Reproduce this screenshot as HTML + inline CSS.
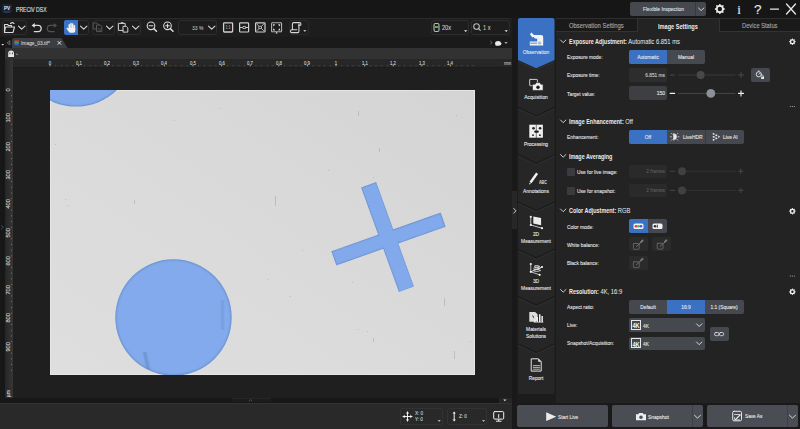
<!DOCTYPE html>
<html><head><meta charset="utf-8">
<style>
*{margin:0;padding:0;box-sizing:border-box}
html,body{width:800px;height:429px;overflow:hidden;background:#1c1c1c;font-family:"Liberation Sans",sans-serif;color:#e6e6e6}
.a{position:absolute}
.t{position:absolute;white-space:nowrap;line-height:1}
.t:not([style*="bold"]){-webkit-text-stroke:.12px currentColor}
svg{position:absolute;overflow:visible}
</style></head><body>
<div class="a" style="left:0px;top:0px;width:800px;height:18px;background:#161616;"></div>
<div class="a" style="left:2.2px;top:4px;width:9.7px;height:9.4px;background:#18223a;border-radius:1px"></div>
<div class="t" style="left:6.9px;top:6.44px;font-size:5.11px;color:#e9edf5;font-weight:bold;transform:translateX(-50%) scaleX(0.9);transform-origin:50% 0;">PV</div>
<svg width="800" height="429" style="left:0;top:0"><path d="M3.8 11.6q3.1 1.3 6.2 0" fill="none" stroke="#5a6a90" stroke-width=".5"/></svg>
<div class="t" style="left:16.25px;top:7.11px;font-size:6.37px;color:#e0e0e0;transform:scaleX(0.8);transform-origin:0 0;">PRECiV DSX</div>
<div class="a" style="left:0px;top:18px;width:512px;height:19px;background:#1d1d1d;border-top:1px solid #2b2b2b;border-radius:0 3px 0 0"></div>
<div class="a" style="left:2px;top:20px;width:25px;height:15px;background:transparent;border:1px solid #2d2d2d;border-radius:3px"></div>
<div class="a" style="left:64px;top:20px;width:25px;height:15px;background:transparent;border:1px solid #2d2d2d;border-radius:3px"></div>
<div class="a" style="left:64px;top:20px;width:14.3px;height:15px;background:#3a72c6;border-radius:2px 0 0 2px"></div>
<div class="a" style="left:91.5px;top:20px;width:23.5px;height:15px;background:transparent;border:1px solid #2a2a2a;border-radius:3px"></div>
<div class="a" style="left:117px;top:20px;width:24px;height:15px;background:transparent;border:1px solid #2d2d2d;border-radius:3px"></div>
<div class="a" style="left:178px;top:20px;width:39px;height:15px;background:transparent;border:1px solid #2d2d2d;border-radius:3px"></div>
<div class="a" style="left:289px;top:20px;width:20px;height:15px;background:transparent;border:1px solid #2a2a2a;border-radius:3px"></div>
<div class="a" style="left:431px;top:20px;width:38px;height:15px;background:transparent;border:1px solid #2d2d2d;border-radius:3px"></div>
<div class="a" style="left:471px;top:20px;width:39px;height:15px;background:transparent;border:1px solid #2d2d2d;border-radius:3px"></div>
<div class="t" style="left:228.1px;top:26.15px;font-size:4.50px;color:#9a9a9a;font-weight:bold;transform:translateX(-50%) scaleX(0.8);transform-origin:50% 0;">1:1</div>
<div class="t" style="left:191.5px;top:24.88px;font-size:6.25px;color:#aeb6be;transform:scaleX(0.8);transform-origin:0 0;">33 %</div>
<div class="t" style="left:442px;top:24.40px;font-size:7.00px;color:#c5cbd2;transform:scaleX(0.8);transform-origin:0 0;">20x</div>
<div class="t" style="left:483px;top:24.40px;font-size:7.00px;color:#c9c0a0;transform:scaleX(0.8);transform-origin:0 0;">1 x</div>
<svg width="800" height="429" style="left:0;top:0" fill="none" stroke="#d9d9d9" stroke-width="1.1" stroke-linecap="round" stroke-linejoin="round">
 <path d="M4.5 24.5v8h8.5l1.5-5.5h-9l-1 5.5M4.5 24.5h3l1 1h3v1.5"/>
 <path d="M10.5 23.5c1-1 2.5-1 3.5 0" />
 <path d="M18.5 26.2l3.2 3 3.2-3"/>
 <path d="M80.5 26.2l3.2 3 3.2-3"/>
 <path d="M106.5 26.2l3.2 3 3.2-3"/>
 <path d="M132.5 26.2l3.2 3 3.2-3"/>
 <path d="M208.5 26.2l3.2 3 3.2-3"/>
 <path d="M34.5 25.4h3.6a3.1 3.1 0 0 1 0 6.2h-3.8" stroke-width="1.2"/><path fill="#e0e0e0" stroke="none" d="M31.6 25.4l3.2-2.3v4.6z"/>
 <path stroke="#505050" d="M54 25.4h-3.6a3.1 3.1 0 0 0 0 6.2h3.8" stroke-width="1.2"/><path fill="#505050" stroke="none" d="M57 25.4l-3.2-2.3v4.6z"/>
 <g stroke="#f0f0f0" stroke-linecap="round" fill="#f0f0f0"><path stroke-width="1.5" d="M69.3 28.5V24.8M71 28V23.6M72.7 28V24M74.4 28.5V25.8M68.6 30.3L67.3 28.3"/><path stroke="none" d="M68.3 28h7v2.2q0 2.6-2.6 2.6h-2.4q-1.6 0-2-2z"/></g>
 <g stroke="#5c5c5c" stroke-width=".9"><path d="M93.6 22.9h3.2l1.5 1.5v4.6h-4.7z"/><path fill="#1d1d1d" d="M96.9 25h3.4l1.5 1.6v5h-4.9z"/><path d="M98 28.8h2.8M98 30.3h2.8" stroke-width=".6"/></g>
 <g stroke="#d0d0d0" stroke-width="1"><path d="M118.8 23.4h6.4v7h-6.4z"/><path fill="#d0d0d0" stroke="none" d="M120.8 22.2h2.6v1.6h-2.6z"/><path fill="#1d1d1d" d="M123.4 26.3h2.8l1.6 1.6v4.2h-4.4z"/></g>
 <circle cx="151" cy="25.8" r="3.8"/><path d="M153.8 28.6l2.7 2.7" stroke-width="1.5"/><path d="M149.2 25.8h3.6"/>
 <circle cx="167.5" cy="25.8" r="3.8"/><path d="M170.3 28.6l2.7 2.7" stroke-width="1.5"/><path d="M165.7 25.8h3.6M167.5 24v3.6"/>
 <rect x="223.6" y="22.8" width="9" height="9.2" rx=".8" stroke-width="1.3" stroke="#d0d0d0"/>
 <rect x="239.6" y="22.8" width="9" height="9.2" rx=".8" stroke-width="1.2" stroke="#d0d0d0"/><path d="M239.8 27.5h2.5M246.3 27.5h2.3" stroke-width=".9"/><ellipse cx="244.3" cy="27.5" rx="1.9" ry="1.1" stroke-width=".9"/>
 <rect x="255.6" y="22.8" width="9.4" height="9.2" rx=".8" stroke-width="1.2" stroke="#d0d0d0"/><rect x="259.2" y="26.3" width="2.3" height="2.3" stroke-width=".8"/><path d="M257 24.2l1.6 1.6M263.6 24.2l-1.6 1.6M257 30.6l1.6-1.6M263.6 30.6l-1.6-1.6" stroke-width=".8"/>
 <rect x="271.6" y="22.8" width="10" height="9" rx=".6" stroke-width="1.1" stroke="#bdbdbd" stroke-dasharray="1.6 1"/>
 <path fill="#e0e0e0" stroke="none" d="M273 24.2l2.3.3-2 2zM280.2 24.2l-2.3.3 2 2zM273 30.6l2.3-.3-2-2zM280.2 30.6l-2.3-.3 2-2zM275.6 33.4l1-1.8 1 1.8z"/>
 <g stroke="#d6d6d6" stroke-width="1.1"><path d="M292.4 29.6V23.9q0-1.3 1.3-1.3h5.9q1.3 0 1.3 1.3v.6q0 .9-.9 .9h-1.2"/><path d="M298.9 24v7.4q0 1.2-1.2 1.2h-5.9q-1.3 0-1.3-1.4t1.3-1.4h5"/></g>
 <path fill="#e6e6e6" stroke="none" d="M303.2 30.2h3.2l-1.6 1.6z"/>
 <rect x="434" y="23.5" width="5" height="8" rx="1.5" stroke="#bbb"/><path d="M434.5 26h4v2h-4z" fill="#5aa84a" stroke="none"/>
 <path fill="#e6e6e6" stroke="none" d="M464 30.2h3.4l-1.7 1.7zM504.5 30.2h3.4l-1.7 1.7z"/>
 <circle cx="476.5" cy="26.5" r="2.8" stroke="#bbb"/><path d="M478.5 28.5l1.8 1.8" stroke="#bbb"/>
</svg>
<div class="a" style="left:0px;top:37px;width:512px;height:11px;background:#1a1a1a;"></div>
<div class="a" style="left:0px;top:37px;width:5px;height:361px;background:#171717;"></div>
<svg width="800" height="429" style="left:0;top:0"><path fill="#3c3e42" d="M12 48V40Q12 38 14 38H61.5L67.5 48Z"/></svg>
<div class="t" style="left:21px;top:39.94px;font-size:6.12px;color:#cfcfcf;transform:scaleX(0.8);transform-origin:0 0;">Image_03.tif*</div>
<div class="a" style="left:5px;top:48px;width:507px;height:11.2px;background:#323232;"></div>
<div class="a" style="left:5px;top:59.2px;width:507px;height:8.3px;background:#272727;"></div>
<div class="a" style="left:5px;top:59.2px;width:8px;height:338.8px;background:linear-gradient(90deg,#262626,#363636);"></div>
<div class="a" style="left:13px;top:67.5px;width:499px;height:330.5px;background:#1f1f1f;"></div>
<svg width="800" height="429" style="left:0;top:0" fill="#8a8a8a" stroke="none"><rect x="49.60" y="64.8" width="0.8" height="1.6" fill="#aaa"/><rect x="55.32" y="65.3" width="0.8" height="0.9" fill="#6a6a6a"/><rect x="61.04" y="65.3" width="0.8" height="0.9" fill="#6a6a6a"/><rect x="66.76" y="65.3" width="0.8" height="0.9" fill="#6a6a6a"/><rect x="72.48" y="65.3" width="0.8" height="0.9" fill="#6a6a6a"/><rect x="78.20" y="64.8" width="0.8" height="1.6" fill="#aaa"/><rect x="83.92" y="65.3" width="0.8" height="0.9" fill="#6a6a6a"/><rect x="89.64" y="65.3" width="0.8" height="0.9" fill="#6a6a6a"/><rect x="95.36" y="65.3" width="0.8" height="0.9" fill="#6a6a6a"/><rect x="101.08" y="65.3" width="0.8" height="0.9" fill="#6a6a6a"/><rect x="106.80" y="64.8" width="0.8" height="1.6" fill="#aaa"/><rect x="112.52" y="65.3" width="0.8" height="0.9" fill="#6a6a6a"/><rect x="118.24" y="65.3" width="0.8" height="0.9" fill="#6a6a6a"/><rect x="123.96" y="65.3" width="0.8" height="0.9" fill="#6a6a6a"/><rect x="129.68" y="65.3" width="0.8" height="0.9" fill="#6a6a6a"/><rect x="135.40" y="64.8" width="0.8" height="1.6" fill="#aaa"/><rect x="141.12" y="65.3" width="0.8" height="0.9" fill="#6a6a6a"/><rect x="146.84" y="65.3" width="0.8" height="0.9" fill="#6a6a6a"/><rect x="152.56" y="65.3" width="0.8" height="0.9" fill="#6a6a6a"/><rect x="158.28" y="65.3" width="0.8" height="0.9" fill="#6a6a6a"/><rect x="164.00" y="64.8" width="0.8" height="1.6" fill="#aaa"/><rect x="169.72" y="65.3" width="0.8" height="0.9" fill="#6a6a6a"/><rect x="175.44" y="65.3" width="0.8" height="0.9" fill="#6a6a6a"/><rect x="181.16" y="65.3" width="0.8" height="0.9" fill="#6a6a6a"/><rect x="186.88" y="65.3" width="0.8" height="0.9" fill="#6a6a6a"/><rect x="192.60" y="64.8" width="0.8" height="1.6" fill="#aaa"/><rect x="198.32" y="65.3" width="0.8" height="0.9" fill="#6a6a6a"/><rect x="204.04" y="65.3" width="0.8" height="0.9" fill="#6a6a6a"/><rect x="209.76" y="65.3" width="0.8" height="0.9" fill="#6a6a6a"/><rect x="215.48" y="65.3" width="0.8" height="0.9" fill="#6a6a6a"/><rect x="221.20" y="64.8" width="0.8" height="1.6" fill="#aaa"/><rect x="226.92" y="65.3" width="0.8" height="0.9" fill="#6a6a6a"/><rect x="232.64" y="65.3" width="0.8" height="0.9" fill="#6a6a6a"/><rect x="238.36" y="65.3" width="0.8" height="0.9" fill="#6a6a6a"/><rect x="244.08" y="65.3" width="0.8" height="0.9" fill="#6a6a6a"/><rect x="249.80" y="64.8" width="0.8" height="1.6" fill="#aaa"/><rect x="255.52" y="65.3" width="0.8" height="0.9" fill="#6a6a6a"/><rect x="261.24" y="65.3" width="0.8" height="0.9" fill="#6a6a6a"/><rect x="266.96" y="65.3" width="0.8" height="0.9" fill="#6a6a6a"/><rect x="272.68" y="65.3" width="0.8" height="0.9" fill="#6a6a6a"/><rect x="278.40" y="64.8" width="0.8" height="1.6" fill="#aaa"/><rect x="284.12" y="65.3" width="0.8" height="0.9" fill="#6a6a6a"/><rect x="289.84" y="65.3" width="0.8" height="0.9" fill="#6a6a6a"/><rect x="295.56" y="65.3" width="0.8" height="0.9" fill="#6a6a6a"/><rect x="301.28" y="65.3" width="0.8" height="0.9" fill="#6a6a6a"/><rect x="307.00" y="64.8" width="0.8" height="1.6" fill="#aaa"/><rect x="312.72" y="65.3" width="0.8" height="0.9" fill="#6a6a6a"/><rect x="318.44" y="65.3" width="0.8" height="0.9" fill="#6a6a6a"/><rect x="324.16" y="65.3" width="0.8" height="0.9" fill="#6a6a6a"/><rect x="329.88" y="65.3" width="0.8" height="0.9" fill="#6a6a6a"/><rect x="335.60" y="64.8" width="0.8" height="1.6" fill="#aaa"/><rect x="341.32" y="65.3" width="0.8" height="0.9" fill="#6a6a6a"/><rect x="347.04" y="65.3" width="0.8" height="0.9" fill="#6a6a6a"/><rect x="352.76" y="65.3" width="0.8" height="0.9" fill="#6a6a6a"/><rect x="358.48" y="65.3" width="0.8" height="0.9" fill="#6a6a6a"/><rect x="364.20" y="64.8" width="0.8" height="1.6" fill="#aaa"/><rect x="369.92" y="65.3" width="0.8" height="0.9" fill="#6a6a6a"/><rect x="375.64" y="65.3" width="0.8" height="0.9" fill="#6a6a6a"/><rect x="381.36" y="65.3" width="0.8" height="0.9" fill="#6a6a6a"/><rect x="387.08" y="65.3" width="0.8" height="0.9" fill="#6a6a6a"/><rect x="392.80" y="64.8" width="0.8" height="1.6" fill="#aaa"/><rect x="398.52" y="65.3" width="0.8" height="0.9" fill="#6a6a6a"/><rect x="404.24" y="65.3" width="0.8" height="0.9" fill="#6a6a6a"/><rect x="409.96" y="65.3" width="0.8" height="0.9" fill="#6a6a6a"/><rect x="415.68" y="65.3" width="0.8" height="0.9" fill="#6a6a6a"/><rect x="421.40" y="64.8" width="0.8" height="1.6" fill="#aaa"/><rect x="427.12" y="65.3" width="0.8" height="0.9" fill="#6a6a6a"/><rect x="432.84" y="65.3" width="0.8" height="0.9" fill="#6a6a6a"/><rect x="438.56" y="65.3" width="0.8" height="0.9" fill="#6a6a6a"/><rect x="444.28" y="65.3" width="0.8" height="0.9" fill="#6a6a6a"/><rect x="450.00" y="64.8" width="0.8" height="1.6" fill="#aaa"/><rect x="455.72" y="65.3" width="0.8" height="0.9" fill="#6a6a6a"/><rect x="461.44" y="65.3" width="0.8" height="0.9" fill="#6a6a6a"/><rect x="467.16" y="65.3" width="0.8" height="0.9" fill="#6a6a6a"/><rect x="472.88" y="65.3" width="0.8" height="0.9" fill="#6a6a6a"/><rect x="11" y="95.32" width="0.9" height="0.8"/><rect x="11" y="101.04" width="0.9" height="0.8"/><rect x="11" y="106.76" width="0.9" height="0.8"/><rect x="11" y="112.48" width="0.9" height="0.8"/><rect x="11" y="123.92" width="0.9" height="0.8"/><rect x="11" y="129.64" width="0.9" height="0.8"/><rect x="11" y="135.36" width="0.9" height="0.8"/><rect x="11" y="141.08" width="0.9" height="0.8"/><rect x="11" y="152.52" width="0.9" height="0.8"/><rect x="11" y="158.24" width="0.9" height="0.8"/><rect x="11" y="163.96" width="0.9" height="0.8"/><rect x="11" y="169.68" width="0.9" height="0.8"/><rect x="11" y="181.12" width="0.9" height="0.8"/><rect x="11" y="186.84" width="0.9" height="0.8"/><rect x="11" y="192.56" width="0.9" height="0.8"/><rect x="11" y="198.28" width="0.9" height="0.8"/><rect x="11" y="209.72" width="0.9" height="0.8"/><rect x="11" y="215.44" width="0.9" height="0.8"/><rect x="11" y="221.16" width="0.9" height="0.8"/><rect x="11" y="226.88" width="0.9" height="0.8"/><rect x="11" y="238.32" width="0.9" height="0.8"/><rect x="11" y="244.04" width="0.9" height="0.8"/><rect x="11" y="249.76" width="0.9" height="0.8"/><rect x="11" y="255.48" width="0.9" height="0.8"/><rect x="11" y="266.92" width="0.9" height="0.8"/><rect x="11" y="272.64" width="0.9" height="0.8"/><rect x="11" y="278.36" width="0.9" height="0.8"/><rect x="11" y="284.08" width="0.9" height="0.8"/><rect x="11" y="295.52" width="0.9" height="0.8"/><rect x="11" y="301.24" width="0.9" height="0.8"/><rect x="11" y="306.96" width="0.9" height="0.8"/><rect x="11" y="312.68" width="0.9" height="0.8"/><rect x="11" y="324.12" width="0.9" height="0.8"/><rect x="11" y="329.84" width="0.9" height="0.8"/><rect x="11" y="335.56" width="0.9" height="0.8"/><rect x="11" y="341.28" width="0.9" height="0.8"/><rect x="11" y="352.72" width="0.9" height="0.8"/><rect x="11" y="358.44" width="0.9" height="0.8"/><rect x="11" y="364.16" width="0.9" height="0.8"/><rect x="11" y="369.88" width="0.9" height="0.8"/></svg>
<div class="t" style="left:50.0px;top:60.71px;font-size:5.37px;color:#d0d0d0;transform:translateX(-50%) scaleX(0.8);transform-origin:50% 0;">0</div>
<div class="t" style="left:78.6px;top:60.71px;font-size:5.37px;color:#d0d0d0;transform:translateX(-50%) scaleX(0.8);transform-origin:50% 0;">0,1</div>
<div class="t" style="left:107.2px;top:60.71px;font-size:5.37px;color:#d0d0d0;transform:translateX(-50%) scaleX(0.8);transform-origin:50% 0;">0,2</div>
<div class="t" style="left:135.8px;top:60.71px;font-size:5.37px;color:#d0d0d0;transform:translateX(-50%) scaleX(0.8);transform-origin:50% 0;">0,3</div>
<div class="t" style="left:164.4px;top:60.71px;font-size:5.37px;color:#d0d0d0;transform:translateX(-50%) scaleX(0.8);transform-origin:50% 0;">0,4</div>
<div class="t" style="left:193.0px;top:60.71px;font-size:5.37px;color:#d0d0d0;transform:translateX(-50%) scaleX(0.8);transform-origin:50% 0;">0,5</div>
<div class="t" style="left:221.60000000000002px;top:60.71px;font-size:5.37px;color:#d0d0d0;transform:translateX(-50%) scaleX(0.8);transform-origin:50% 0;">0,6</div>
<div class="t" style="left:250.20000000000002px;top:60.71px;font-size:5.37px;color:#d0d0d0;transform:translateX(-50%) scaleX(0.8);transform-origin:50% 0;">0,7</div>
<div class="t" style="left:278.8px;top:60.71px;font-size:5.37px;color:#d0d0d0;transform:translateX(-50%) scaleX(0.8);transform-origin:50% 0;">0,8</div>
<div class="t" style="left:307.40000000000003px;top:60.71px;font-size:5.37px;color:#d0d0d0;transform:translateX(-50%) scaleX(0.8);transform-origin:50% 0;">0,9</div>
<div class="t" style="left:336.0px;top:60.71px;font-size:5.37px;color:#d0d0d0;transform:translateX(-50%) scaleX(0.8);transform-origin:50% 0;">1</div>
<div class="t" style="left:364.6px;top:60.71px;font-size:5.37px;color:#d0d0d0;transform:translateX(-50%) scaleX(0.8);transform-origin:50% 0;">1,1</div>
<div class="t" style="left:393.20000000000005px;top:60.71px;font-size:5.37px;color:#d0d0d0;transform:translateX(-50%) scaleX(0.8);transform-origin:50% 0;">1,2</div>
<div class="t" style="left:421.8px;top:60.71px;font-size:5.37px;color:#d0d0d0;transform:translateX(-50%) scaleX(0.8);transform-origin:50% 0;">1,3</div>
<div class="t" style="left:450.40000000000003px;top:60.71px;font-size:5.37px;color:#d0d0d0;transform:translateX(-50%) scaleX(0.8);transform-origin:50% 0;">1,4</div>
<div class="t" style="left:503.5px;top:60.71px;font-size:5.37px;color:#bdbdbd;transform:scaleX(0.8);transform-origin:0 0;">mm</div>
<div class="t" style="left:-1.2px;width:20px;text-align:center;top:86.6px;font-size:5.7px;color:#d4d4d4;transform:rotate(-90deg)">0</div>
<div class="t" style="left:-1.2px;width:20px;text-align:center;top:115.2px;font-size:5.7px;color:#d4d4d4;transform:rotate(-90deg)">100</div>
<div class="t" style="left:-1.2px;width:20px;text-align:center;top:143.8px;font-size:5.7px;color:#d4d4d4;transform:rotate(-90deg)">200</div>
<div class="t" style="left:-1.2px;width:20px;text-align:center;top:172.4px;font-size:5.7px;color:#d4d4d4;transform:rotate(-90deg)">300</div>
<div class="t" style="left:-1.2px;width:20px;text-align:center;top:201.0px;font-size:5.7px;color:#d4d4d4;transform:rotate(-90deg)">400</div>
<div class="t" style="left:-1.2px;width:20px;text-align:center;top:229.6px;font-size:5.7px;color:#d4d4d4;transform:rotate(-90deg)">500</div>
<div class="t" style="left:-1.2px;width:20px;text-align:center;top:258.2px;font-size:5.7px;color:#d4d4d4;transform:rotate(-90deg)">600</div>
<div class="t" style="left:-1.2px;width:20px;text-align:center;top:286.8px;font-size:5.7px;color:#d4d4d4;transform:rotate(-90deg)">700</div>
<div class="t" style="left:-1.2px;width:20px;text-align:center;top:315.4px;font-size:5.7px;color:#d4d4d4;transform:rotate(-90deg)">800</div>
<div class="t" style="left:-1.2px;width:20px;text-align:center;top:344.0px;font-size:5.7px;color:#d4d4d4;transform:rotate(-90deg)">900</div>
<div class="t" style="left:-1.2px;width:20px;text-align:center;top:390.5px;font-size:5.2px;color:#cfcfcf;transform:rotate(-90deg)">µm</div>
<div class="a" style="left:50px;top:90px;width:425px;height:285px;background:#d9d9d9;overflow:hidden">
  <div class="a" style="left:0;top:0;width:425px;height:285px;background:linear-gradient(to top right,#dedede,#dadada 50%,#d4d4d4)"></div>
  <div class="a" style="left:0;top:0;width:425px;height:285px;border:1px solid #e6e6e6"></div>
  <div class="a" style="left:4.9px;top:53.7px;width:0.7px;height:0.7px;background:#8a8a8a;opacity:.35"></div><div class="a" style="left:14.7px;top:108.5px;width:0.6px;height:0.6px;background:#8a8a8a;opacity:.35"></div><div class="a" style="left:17.0px;top:115.0px;width:0.6px;height:0.6px;background:#8a8a8a;opacity:.35"></div><div class="a" style="left:84.0px;top:110.0px;width:0.5px;height:4px;background:#8a8a8a;opacity:.35"></div><div class="a" style="left:123.8px;top:30.3px;width:0.6px;height:0.6px;background:#8a8a8a;opacity:.35"></div><div class="a" style="left:169.0px;top:18.0px;width:0.6px;height:0.6px;background:#8a8a8a;opacity:.35"></div><div class="a" style="left:307.9px;top:20.5px;width:0.6px;height:5px;background:#8a8a8a;opacity:.35"></div><div class="a" style="left:329.0px;top:58.0px;width:0.6px;height:4px;background:#8a8a8a;opacity:.35"></div><div class="a" style="left:277.9px;top:80.0px;width:0.6px;height:0.6px;background:#8a8a8a;opacity:.35"></div><div class="a" style="left:322.6px;top:87.4px;width:0.7px;height:0.7px;background:#8a8a8a;opacity:.35"></div><div class="a" style="left:224.7px;top:106.0px;width:0.6px;height:10px;background:#8a8a8a;opacity:.35"></div><div class="a" style="left:405.8px;top:24.5px;width:0.6px;height:0.6px;background:#8a8a8a;opacity:.35"></div><div class="a" style="left:218.4px;top:189.0px;width:0.6px;height:0.6px;background:#8a8a8a;opacity:.35"></div><div class="a" style="left:301.9px;top:192.4px;width:0.8px;height:0.8px;background:#8a8a8a;opacity:.35"></div><div class="a" style="left:308.0px;top:238.6px;width:0.6px;height:0.6px;background:#8a8a8a;opacity:.35"></div><div class="a" style="left:317.4px;top:240.7px;width:0.6px;height:0.6px;background:#8a8a8a;opacity:.35"></div><div class="a" style="left:323.0px;top:248.0px;width:0.5px;height:4px;background:#8a8a8a;opacity:.35"></div><div class="a" style="left:394.0px;top:208.0px;width:0.5px;height:8px;background:#8a8a8a;opacity:.35"></div><div class="a" style="left:404.0px;top:261.0px;width:0.5px;height:8px;background:#8a8a8a;opacity:.35"></div><div class="a" style="left:419.5px;top:250.8px;width:0.6px;height:0.6px;background:#8a8a8a;opacity:.35"></div><div class="a" style="left:252.0px;top:160.0px;width:0.6px;height:0.6px;background:#8a8a8a;opacity:.35"></div><div class="a" style="left:240.4px;top:206.0px;width:0.6px;height:0.6px;background:#8a8a8a;opacity:.35"></div>
  <div class="a" style="left:-32px;top:-100px;width:116px;height:116px;border-radius:50%;background:#82aaec;box-shadow:0 0 0 .6px #6f93cf,inset 0 0 2px #5d84c0"></div>
  <div class="a" style="left:65.6px;top:169.9px;width:115px;height:115px;border-radius:50%;background:#82aaec;box-shadow:0 0 0 .7px #6f93cf;overflow:hidden"><div class="a" style="left:28px;top:92px;width:6px;height:20px;background:linear-gradient(90deg,transparent,#4f78a8 40%,transparent);opacity:.45;transform:rotate(-12deg)"></div><div class="a" style="left:104px;top:40px;width:5px;height:30px;background:linear-gradient(90deg,transparent,#5b82b8,transparent);opacity:.3"></div><div class="a" style="left:0;top:0;width:115px;height:115px;border-radius:50%;box-shadow:inset 0 0 2px #5d84c0"></div></div>
  <div class="a" style="left:330px;top:92px;width:15px;height:110px;background:#82a9eb;box-shadow:0 0 0 .5px #7397d4,inset 0 0 1.5px #5d84c0;transform:rotate(-19.9deg)"></div>
  <div class="a" style="left:280.5px;top:141.5px;width:115px;height:14px;background:#82a9eb;box-shadow:0 0 0 .5px #7397d4,inset 0 0 1.5px #5d84c0;transform:rotate(-19.5deg)"></div>
  <div class="a" style="left:330.5px;top:92.5px;width:14px;height:109px;background:#82a9eb;transform:rotate(-19.9deg)"></div>
</div>
<div class="a" style="left:0px;top:398px;width:512px;height:5px;background:#171717;"></div>
<div class="a" style="left:232px;top:397.8px;width:38.6px;height:4.7px;background:#1c1c1c;border-top:1px solid #262626"></div>
<svg width="800" height="429" style="left:0;top:0"><path d="M248.8 401.3l1.8-1.8 1.8 1.8" fill="none" stroke="#5a5a5a" stroke-width=".8"/></svg>
<div class="a" style="left:0px;top:403px;width:512px;height:26px;background:#292929;border-top:1px solid #333"></div>
<div class="a" style="left:400.2px;top:407.8px;width:42.5px;height:17px;background:transparent;border:1px solid #323232;border-radius:2px"></div>
<div class="a" style="left:447.2px;top:407.8px;width:40px;height:17px;background:transparent;border:1px solid #323232;border-radius:2px"></div>
<div class="t" style="left:414.5px;top:411.12px;font-size:5.75px;color:#c8d0d8;transform:scaleX(0.8);transform-origin:0 0;">X: 0</div>
<div class="t" style="left:414.5px;top:417.32px;font-size:5.75px;color:#c8d0d8;transform:scaleX(0.8);transform-origin:0 0;">Y: 0</div>
<div class="t" style="left:458.7px;top:414.32px;font-size:5.75px;color:#c8d0d8;transform:scaleX(0.8);transform-origin:0 0;">Z: 0</div>
<div class="a" style="left:498.6px;top:398px;width:13px;height:5px;background:#262626;"></div>
<div class="a" style="left:512px;top:18px;width:5px;height:411px;background:#191919;"></div>
<div class="a" style="left:517px;top:18px;width:39px;height:385px;background:#1c1c1c;"></div>
<div class="a" style="left:512.3px;top:191.2px;width:4.6px;height:38px;background:#272727;"></div>
<svg width="800" height="429" style="left:0;top:0"><path d="M1.2 225.3l2.2 2-2.2 2" fill="none" stroke="#555" stroke-width=".8"/></svg>
<svg width="800" height="429" style="left:0;top:0"><path d="M513.5 208.2l2.5 2.6-2.5 2.6" fill="none" stroke="#e0e0e0" stroke-width=".9"/></svg>
<svg width="800" height="429" style="left:0;top:0"><path fill="#262626" d="M518 50H554.5V392Q554.5 394 552.5 394H520Q518 394 518 392Z"/><path fill="#3a71c3" d="M518 20Q518 18 520 18H552.5Q554.5 18 554.5 20V60.0L536.25 68.3L518 60.0Z"/><path fill="none" stroke="#1b1b1b" stroke-width="1.1" d="M518 107.3L536.25 115.9L554.5 107.3"/><path fill="none" stroke="#313131" stroke-width=".8" d="M518 108.9L536.25 117.5L554.5 108.9"/><path fill="none" stroke="#1b1b1b" stroke-width="1.1" d="M518 154.6L536.25 163.2L554.5 154.6"/><path fill="none" stroke="#313131" stroke-width=".8" d="M518 156.2L536.25 164.8L554.5 156.2"/><path fill="none" stroke="#1b1b1b" stroke-width="1.1" d="M518 201.9L536.25 210.5L554.5 201.9"/><path fill="none" stroke="#313131" stroke-width=".8" d="M518 203.5L536.25 212.1L554.5 203.5"/><path fill="none" stroke="#1b1b1b" stroke-width="1.1" d="M518 249.2L536.25 257.8L554.5 249.2"/><path fill="none" stroke="#313131" stroke-width=".8" d="M518 250.8L536.25 259.4L554.5 250.8"/><path fill="none" stroke="#1b1b1b" stroke-width="1.1" d="M518 296.5L536.25 305.1L554.5 296.5"/><path fill="none" stroke="#313131" stroke-width=".8" d="M518 298.1L536.25 306.7L554.5 298.1"/><path fill="none" stroke="#1b1b1b" stroke-width="1.1" d="M518 343.8L536.25 352.4L554.5 343.8"/><path fill="none" stroke="#313131" stroke-width=".8" d="M518 345.4L536.25 354.0L554.5 345.4"/><path fill="none" stroke="#313131" stroke-width=".8" d="M518 61.8L536.25 70.1L554.5 61.8"/></svg>
<div class="t" style="left:538.5px;top:181.05px;font-size:4.50px;color:#e0e0e0;font-weight:bold;transform:scaleX(0.8);transform-origin:0 0;">ABC</div>
<div class="t" style="left:536.25px;top:48.74px;font-size:6.12px;color:#e6e6e6;transform:translateX(-50%) scaleX(0.8);transform-origin:50% 0;">Observation</div>
<div class="t" style="left:536.25px;top:93.94px;font-size:6.12px;color:#e6e6e6;transform:translateX(-50%) scaleX(0.8);transform-origin:50% 0;">Acquisition</div>
<div class="t" style="left:536.25px;top:140.94px;font-size:6.12px;color:#e6e6e6;transform:translateX(-50%) scaleX(0.8);transform-origin:50% 0;">Processing</div>
<div class="t" style="left:536.25px;top:188.44px;font-size:6.12px;color:#e6e6e6;transform:translateX(-50%) scaleX(0.8);transform-origin:50% 0;">Annotations</div>
<div class="t" style="left:536.25px;top:231.34px;font-size:6.12px;color:#e6e6e6;transform:translateX(-50%) scaleX(0.8);transform-origin:50% 0;">2D</div>
<div class="t" style="left:536.25px;top:238.34px;font-size:6.12px;color:#e6e6e6;transform:translateX(-50%) scaleX(0.8);transform-origin:50% 0;">Measurement</div>
<div class="t" style="left:536.25px;top:278.44px;font-size:6.12px;color:#e6e6e6;transform:translateX(-50%) scaleX(0.8);transform-origin:50% 0;">3D</div>
<div class="t" style="left:536.25px;top:285.44px;font-size:6.12px;color:#e6e6e6;transform:translateX(-50%) scaleX(0.8);transform-origin:50% 0;">Measurement</div>
<div class="t" style="left:536.25px;top:325.94px;font-size:6.12px;color:#e6e6e6;transform:translateX(-50%) scaleX(0.8);transform-origin:50% 0;">Materials</div>
<div class="t" style="left:536.25px;top:332.94px;font-size:6.12px;color:#e6e6e6;transform:translateX(-50%) scaleX(0.8);transform-origin:50% 0;">Solutions</div>
<div class="t" style="left:536.25px;top:374.94px;font-size:6.12px;color:#e6e6e6;transform:translateX(-50%) scaleX(0.8);transform-origin:50% 0;">Report</div>
<div class="a" style="left:556px;top:32px;width:244px;height:371px;background:#232323;"></div>
<div class="a" style="left:556px;top:18px;width:244px;height:14px;background:#1a1a1a;border-top:1px solid #2e2e2e"></div>
<div class="a" style="left:556px;top:31px;width:82px;height:1px;background:#333;"></div>
<div class="a" style="left:637px;top:18px;width:1px;height:14px;background:#333;"></div>
<div class="a" style="left:638px;top:18px;width:81px;height:14px;background:#232323;border-top:1px solid #333"></div>
<div class="a" style="left:719px;top:18px;width:1px;height:14px;background:#333;"></div>
<div class="a" style="left:719px;top:31px;width:81px;height:1px;background:#333;"></div>
<div class="t" style="left:568.5px;top:22.31px;font-size:7.38px;color:#a8a8a8;transform:scaleX(0.8);transform-origin:0 0;">Observation Settings</div>
<div class="t" style="left:657.8px;top:22.50px;font-size:7.00px;color:#ececec;font-weight:bold;transform:scaleX(0.8);transform-origin:0 0;">Image Settings</div>
<div class="t" style="left:741.5px;top:22.41px;font-size:7.19px;color:#a8a8a8;transform:scaleX(0.8);transform-origin:0 0;">Device Status</div>
<div class="t" style="left:568.5px;top:38.1px;font-size:6.81px;font-weight:bold;color:#ececec;transform:scaleX(0.8);transform-origin:0 0">Exposure Adjustment: <span style="font-weight:normal;font-size:7.31px">Automatic 6.851 ms</span></div>
<div class="t" style="left:566.5px;top:53.94px;font-size:6.12px;color:#e2e2e2;transform:scaleX(0.8);transform-origin:0 0;">Exposure mode:</div>
<div class="a" style="left:629px;top:49.5px;width:76px;height:14px;background:#46494f;border-radius:2px"></div>
<div class="a" style="left:629px;top:49.5px;width:38px;height:14px;background:#3a71c3;border-radius:2px 0 0 2px"></div>
<div class="t" style="left:648.0px;top:54.24px;font-size:6.12px;color:#e8e8e8;transform:translateX(-50%) scaleX(0.8);transform-origin:50% 0;">Automatic</div>
<div class="t" style="left:686px;top:54.24px;font-size:6.12px;color:#e8e8e8;transform:translateX(-50%) scaleX(0.8);transform-origin:50% 0;">Manual</div>
<div class="t" style="left:566.5px;top:72.44px;font-size:6.12px;color:#e2e2e2;transform:scaleX(0.8);transform-origin:0 0;">Exposure time:</div>
<div class="a" style="left:629px;top:68px;width:38px;height:14px;background:#2d2d2e;border-radius:2px"></div>
<div class="t" style="left:665px;top:72.00px;font-size:6.00px;color:#cfcfcf;transform:translateX(-100%) scaleX(0.8);transform-origin:100% 0;">6.851 ms</div>
<div class="t" style="left:566.5px;top:90.74px;font-size:6.12px;color:#e2e2e2;transform:scaleX(0.8);transform-origin:0 0;">Target value:</div>
<div class="a" style="left:629px;top:86.3px;width:38px;height:14px;background:#3d3f43;border-radius:2px"></div>
<div class="t" style="left:665px;top:90.17px;font-size:6.25px;color:#e6e6e6;transform:translateX(-100%) scaleX(0.8);transform-origin:100% 0;">150</div>
<div class="a" style="left:750.5px;top:68px;width:19px;height:14px;background:#45484e;border-radius:2px"></div>
<div class="t" style="left:568.5px;top:118.1px;font-size:6.81px;font-weight:bold;color:#ececec;transform:scaleX(0.8);transform-origin:0 0">Image Enhancement: <span style="font-weight:normal;font-size:7.31px">Off</span></div>
<div class="t" style="left:566.5px;top:133.74px;font-size:6.12px;color:#e2e2e2;transform:scaleX(0.8);transform-origin:0 0;">Enhancement:</div>
<div class="a" style="left:629px;top:129.5px;width:114.5px;height:14px;background:#45484e;border-radius:2px"></div>
<div class="a" style="left:629px;top:129.5px;width:38px;height:14px;background:#3a71c3;border-radius:2px 0 0 2px"></div>
<div class="t" style="left:648.0px;top:134.24px;font-size:6.12px;color:#e8e8e8;transform:translateX(-50%) scaleX(0.8);transform-origin:50% 0;">Off</div>
<div class="a" style="left:705px;top:129.5px;width:1px;height:14px;background:#393b40;"></div>
<div class="t" style="left:683px;top:134.04px;font-size:6.12px;color:#e8e8e8;transform:scaleX(0.8);transform-origin:0 0;">LiveHDR</div>
<div class="t" style="left:722.5px;top:134.04px;font-size:6.12px;color:#e8e8e8;transform:scaleX(0.8);transform-origin:0 0;">Live AI</div>
<div class="t" style="left:568.5px;top:152.6px;font-size:6.81px;font-weight:bold;color:#ececec;transform:scaleX(0.8);transform-origin:0 0">Image Averaging <span style="font-weight:normal;font-size:7.31px"></span></div>
<div class="a" style="left:566.5px;top:168px;width:8px;height:8px;background:#3a3b3e;border-radius:1px"></div>
<div class="a" style="left:566.5px;top:187px;width:8px;height:8px;background:#3a3b3e;border-radius:1px"></div>
<div class="t" style="left:577px;top:168.94px;font-size:6.12px;color:#e2e2e2;transform:scaleX(0.8);transform-origin:0 0;">Use for live image:</div>
<div class="t" style="left:577px;top:187.94px;font-size:6.12px;color:#e2e2e2;transform:scaleX(0.8);transform-origin:0 0;">Use for snapshot:</div>
<div class="a" style="left:629px;top:164.5px;width:38px;height:13.5px;background:#2a2a2b;border-radius:2px"></div>
<div class="a" style="left:629px;top:183.5px;width:38px;height:13.5px;background:#2a2a2b;border-radius:2px"></div>
<div class="t" style="left:665px;top:168.30px;font-size:6.00px;color:#5c5c5c;transform:translateX(-100%) scaleX(0.8);transform-origin:100% 0;">2 frames</div>
<div class="t" style="left:665px;top:187.30px;font-size:6.00px;color:#5c5c5c;transform:translateX(-100%) scaleX(0.8);transform-origin:100% 0;">2 frames</div>
<div class="t" style="left:568.5px;top:207.1px;font-size:6.81px;font-weight:bold;color:#ececec;transform:scaleX(0.8);transform-origin:0 0">Color Adjustment: <span style="font-weight:normal;font-size:7.31px">RGB</span></div>
<div class="t" style="left:566.5px;top:223.54px;font-size:6.12px;color:#e2e2e2;transform:scaleX(0.8);transform-origin:0 0;">Color mode:</div>
<div class="a" style="left:629px;top:219.3px;width:38px;height:13.7px;background:#45484e;border-radius:2px"></div>
<div class="a" style="left:629px;top:219.3px;width:19px;height:13.7px;background:#3a71c3;border-radius:2px 0 0 2px"></div>
<div class="t" style="left:566.5px;top:241.64px;font-size:6.12px;color:#e2e2e2;transform:scaleX(0.8);transform-origin:0 0;">White balance:</div>
<div class="a" style="left:629px;top:237.3px;width:19px;height:14px;background:#2b2b2c;border-radius:2px"></div>
<div class="a" style="left:652px;top:237.3px;width:19px;height:14px;background:#2b2b2c;border-radius:2px"></div>
<div class="t" style="left:566.5px;top:259.84px;font-size:6.12px;color:#e2e2e2;transform:scaleX(0.8);transform-origin:0 0;">Black balance:</div>
<div class="a" style="left:629px;top:255.5px;width:19px;height:14px;background:#2b2b2c;border-radius:2px"></div>
<div class="t" style="left:568.5px;top:287.6px;font-size:6.81px;font-weight:bold;color:#ececec;transform:scaleX(0.8);transform-origin:0 0">Resolution: <span style="font-weight:normal;font-size:7.31px">4K, 16:9</span></div>
<div class="t" style="left:566.5px;top:303.94px;font-size:6.12px;color:#e2e2e2;transform:scaleX(0.8);transform-origin:0 0;">Aspect ratio:</div>
<div class="a" style="left:629px;top:300px;width:114.5px;height:13.5px;background:#45484e;border-radius:2px"></div>
<div class="a" style="left:667px;top:300px;width:38px;height:13.5px;background:#3a71c3;border-radius:0"></div>
<div class="t" style="left:686.0px;top:304.49px;font-size:6.12px;color:#e8e8e8;transform:translateX(-50%) scaleX(0.8);transform-origin:50% 0;">16:9</div>
<div class="t" style="left:648px;top:304.44px;font-size:6.12px;color:#e8e8e8;transform:translateX(-50%) scaleX(0.8);transform-origin:50% 0;">Default</div>
<div class="t" style="left:724.3px;top:304.44px;font-size:6.12px;color:#e8e8e8;transform:translateX(-50%) scaleX(0.8);transform-origin:50% 0;">1:1 (Square)</div>
<div class="t" style="left:566.5px;top:322.44px;font-size:6.12px;color:#e2e2e2;transform:scaleX(0.8);transform-origin:0 0;">Live:</div>
<div class="a" style="left:629px;top:318.4px;width:76px;height:13.6px;background:#45484e;border-radius:2px"></div>
<div class="t" style="left:566.5px;top:340.44px;font-size:6.12px;color:#e2e2e2;transform:scaleX(0.8);transform-origin:0 0;">Snapshot/Acquisition:</div>
<div class="a" style="left:629px;top:336.6px;width:76px;height:13.6px;background:#45484e;border-radius:2px"></div>
<div class="a" style="left:710px;top:327.3px;width:18.5px;height:14px;background:#45484e;border-radius:2px"></div>
<div class="a" style="left:630.5px;top:320.0px;width:10.2px;height:10px;background:transparent;border:1px solid #e6e6e6"></div>
<div class="t" style="left:635.6px;top:322.30px;font-size:7.00px;color:#f4f4f4;font-weight:bold;transform:translateX(-50%) scaleX(0.8);transform-origin:50% 0;">4K</div>
<div class="t" style="left:642.5px;top:323.00px;font-size:6.00px;color:#e6e6e6;transform:scaleX(0.8);transform-origin:0 0;">4K</div>
<div class="a" style="left:630.5px;top:338.2px;width:10.2px;height:10px;background:transparent;border:1px solid #e6e6e6"></div>
<div class="t" style="left:635.6px;top:340.50px;font-size:7.00px;color:#f4f4f4;font-weight:bold;transform:translateX(-50%) scaleX(0.8);transform-origin:50% 0;">4K</div>
<div class="t" style="left:642.5px;top:341.20px;font-size:6.00px;color:#e6e6e6;transform:scaleX(0.8);transform-origin:0 0;">4K</div>
<div class="a" style="left:512px;top:403px;width:288px;height:26px;background:#1a1a1a;"></div>
<div class="a" style="left:517px;top:405px;width:91px;height:22px;background:#4a4d53;border-radius:2px"></div>
<div class="a" style="left:612px;top:405px;width:91px;height:22px;background:#4a4d53;border-radius:2px"></div>
<div class="a" style="left:707px;top:405px;width:91px;height:22px;background:#4a4d53;border-radius:2px"></div>
<div class="a" style="left:630px;top:2px;width:76px;height:14px;background:#45484e;border-radius:2px"></div>
<div class="a" style="left:695px;top:2px;width:1px;height:14px;background:#383a3f;"></div>
<div class="t" style="left:643px;top:6.01px;font-size:6.19px;color:#dde3ea;transform:scaleX(0.8);transform-origin:0 0;">Flexible Inspection</div>
<div class="t" style="left:737.2px;top:3px;font-size:13px;font-family:'Liberation Serif',serif;color:#eaeaea">i</div>
<div class="t" style="left:754px;top:3.2px;font-size:13.5px;color:#eaeaea">?</div>
<div class="a" style="left:692px;top:405px;width:1px;height:22px;background:#3d4045;"></div>
<div class="a" style="left:787px;top:405px;width:1px;height:22px;background:#3d4045;"></div>
<div class="t" style="left:558.4px;top:413.80px;font-size:6.00px;color:#e8e8e8;transform:scaleX(0.8);transform-origin:0 0;">Start Live</div>
<div class="t" style="left:647.7px;top:413.71px;font-size:6.19px;color:#e8e8e8;transform:scaleX(0.8);transform-origin:0 0;">Snapshot</div>
<div class="t" style="left:744.5px;top:413.86px;font-size:5.88px;color:#e8e8e8;transform:scaleX(0.8);transform-origin:0 0;">Save As</div>
<svg width="800" height="429" style="left:0;top:0" fill="none" stroke="#e8e8e8" stroke-width="1" stroke-linecap="round" stroke-linejoin="round">
 <!-- title bar icons -->
 <path d="M698.5 8l2.7 2.5 2.7-2.5" stroke="#e6e6e6" stroke-width=".9"/>
 <path fill="#ececec" stroke="none" fill-rule="evenodd" d="M718.94 5.11L719.32 4.03L720.38 4.03L720.76 5.11L721.96 5.60L722.99 5.11L723.74 5.86L723.25 6.89L723.74 8.09L724.82 8.47L724.82 9.53L723.74 9.91L723.25 11.11L723.74 12.14L722.99 12.89L721.96 12.40L720.76 12.89L720.38 13.97L719.32 13.97L718.94 12.89L717.74 12.40L716.71 12.89L715.96 12.14L716.45 11.11L715.96 9.91L714.88 9.53L714.88 8.47L715.96 8.09L716.45 6.89L715.96 5.86L716.71 5.11L717.74 5.60ZM722.05 9.00A2.2 2.2 0 1 0 717.65 9.00A2.2 2.2 0 1 0 722.05 9.00Z"/>
 <path d="M770.5 9.2h8" stroke-width="1.3"/>
 <path d="M786.5 4l9 10M795.5 4l-9 10" stroke-width="1.3"/>
 <!-- section chevrons -->
 <g stroke="#e0e0e0" stroke-width=".9">
 <path d="M560.5 40l2.7 2.7 2.7-2.7"/>
 <path d="M560.5 120l2.7 2.7 2.7-2.7"/>
 <path d="M560.5 154.5l2.7 2.7 2.7-2.7"/>
 <path d="M560.5 209l2.7 2.7 2.7-2.7"/>
 <path d="M560.5 289.5l2.7 2.7 2.7-2.7"/>
 </g>
 <!-- gears in panel -->
 <path fill="#ececec" stroke="none" fill-rule="evenodd" d="M791.81 39.17L792.05 38.42L792.75 38.42L792.99 39.17L793.77 39.49L794.47 39.13L794.97 39.63L794.61 40.33L794.93 41.11L795.68 41.35L795.68 42.05L794.93 42.29L794.61 43.07L794.97 43.77L794.47 44.27L793.77 43.91L792.99 44.23L792.75 44.98L792.05 44.98L791.81 44.23L791.03 43.91L790.33 44.27L789.83 43.77L790.19 43.07L789.87 42.29L789.12 42.05L789.12 41.35L789.87 41.11L790.19 40.33L789.83 39.63L790.33 39.13L791.03 39.49ZM793.60 41.70A1.2 1.2 0 1 0 791.20 41.70A1.2 1.2 0 1 0 793.60 41.70Z"/><path fill="#ececec" stroke="none" fill-rule="evenodd" d="M791.81 208.67L792.05 207.92L792.75 207.92L792.99 208.67L793.77 208.99L794.47 208.63L794.97 209.13L794.61 209.83L794.93 210.61L795.68 210.85L795.68 211.55L794.93 211.79L794.61 212.57L794.97 213.27L794.47 213.77L793.77 213.41L792.99 213.73L792.75 214.48L792.05 214.48L791.81 213.73L791.03 213.41L790.33 213.77L789.83 213.27L790.19 212.57L789.87 211.79L789.12 211.55L789.12 210.85L789.87 210.61L790.19 209.83L789.83 209.13L790.33 208.63L791.03 208.99ZM793.60 211.20A1.2 1.2 0 1 0 791.20 211.20A1.2 1.2 0 1 0 793.60 211.20Z"/><path fill="#ececec" stroke="none" fill-rule="evenodd" d="M791.81 289.27L792.05 288.52L792.75 288.52L792.99 289.27L793.77 289.59L794.47 289.23L794.97 289.73L794.61 290.43L794.93 291.21L795.68 291.45L795.68 292.15L794.93 292.39L794.61 293.17L794.97 293.87L794.47 294.37L793.77 294.01L792.99 294.33L792.75 295.08L792.05 295.08L791.81 294.33L791.03 294.01L790.33 294.37L789.83 293.87L790.19 293.17L789.87 292.39L789.12 292.15L789.12 291.45L789.87 291.21L790.19 290.43L789.83 289.73L790.33 289.23L791.03 289.59ZM793.60 291.80A1.2 1.2 0 1 0 791.20 291.80A1.2 1.2 0 1 0 793.60 291.80Z"/>
 <!-- dots -->
 <g fill="#bdbdbd" stroke="none">
 <circle cx="790.3" cy="106.5" r=".55"/><circle cx="792.3" cy="106.5" r=".55"/><circle cx="794.3" cy="106.5" r=".55"/>
 <circle cx="790.3" cy="276" r=".55"/><circle cx="792.3" cy="276" r=".55"/><circle cx="794.3" cy="276" r=".55"/>
 </g>
 <!-- sliders -->
 <g stroke-width=".9">
 <path d="M670.2 75h4.5" stroke="#4d4d4d"/><path d="M678.5 75h56.5" stroke="#3c3c3c"/><path d="M738.5 75h5M741 72.5v5" stroke="#4d4d4d"/>
 <circle cx="700.6" cy="75" r="4" fill="#46484c" stroke="none"/>
 <path d="M670.2 93.4h4.5" stroke="#f0f0f0" stroke-width="1.1"/><path d="M678.5 93.4h56.5" stroke="#4a4a4a"/><path d="M738.5 93.4h5M741 90.9v5" stroke="#f0f0f0" stroke-width="1.1"/>
 <circle cx="710.8" cy="93.4" r="4.4" fill="#8c9099" stroke="none"/>
 <path d="M670.2 171.3h4.5" stroke="#4a4a4a"/><path d="M678.5 171.3h56.5" stroke="#363636"/><path d="M738.5 171.3h4.5M740.8 169v4.6" stroke="#4a4a4a"/>
 <circle cx="682" cy="171.3" r="4" fill="#3f4043" stroke="none"/>
 <path d="M670.2 190.4h4.5" stroke="#4a4a4a"/><path d="M678.5 190.4h56.5" stroke="#363636"/><path d="M738.5 190.4h4.5M740.8 188.1v4.6" stroke="#4a4a4a"/>
 <circle cx="682" cy="190.4" r="4" fill="#3f4043" stroke="none"/>
 </g>
 <!-- timer icon -->
 <circle cx="758.8" cy="74.3" r="2.6" stroke-width=".9"/><path d="M758.8 71.7v-1M758.8 74.3l1-1" stroke-width=".8"/>
 <path d="M761.2 76.8h2.8v2.2h-2.8z" fill="#e8e8e8" stroke="none"/><path d="M761.8 76.8v-.8a.8 .8 0 0 1 1.6 0v.8" stroke-width=".6"/>
 <!-- LiveHDR icon -->
 <path d="M673.8 133.5v6.5" stroke-width="1"/><path d="M673.8 133.8a3 3 0 0 1 0 6" fill="#e8e8e8" stroke="none"/>
 <path d="M671.5 136.8h-1.2M672.2 134.2l-.8-.8M672.2 139.4l-.8.8M677.8 136.8h1.2M677 134.2l.8-.8M677 139.4l.8.8" stroke-width=".7"/>
 <!-- Live AI icon -->
 <g fill="#e8e8e8" stroke="none"><circle cx="713.5" cy="133.8" r=".9"/><circle cx="713.5" cy="136.8" r=".9"/><circle cx="713.5" cy="139.8" r=".9"/><circle cx="716.5" cy="135.3" r=".9"/><circle cx="716.5" cy="138.3" r=".9"/><path d="M718.2 135.5l2 1.3-2 1.3z"/></g>
 <path d="M713.5 133.8l3 1.5M713.5 136.8l3-1.5M713.5 136.8l3 1.5M713.5 139.8l3-1.5" stroke-width=".4"/>
 <!-- checkmarks none -->
 <!-- color mode icons -->
 <rect x="633.5" y="223.5" width="10" height="5.5" rx="1.5" fill="#f2f2f2" stroke="none"/>
 <circle cx="636" cy="226.2" r="1.3" fill="#e23b3b" stroke="none"/><circle cx="638.5" cy="226.2" r="1.3" fill="#2ec24a" stroke="none"/><circle cx="641" cy="226.2" r="1.3" fill="#3b52e8" stroke="none"/>
 <rect x="652.5" y="223.5" width="10" height="5.5" rx="1.5" fill="#f2f2f2" stroke="none"/>
 <circle cx="655" cy="226.2" r="1.3" fill="#333" stroke="none"/><rect x="656.8" y="224.7" width="1" height="3" fill="#333" stroke="none"/>
 <!-- white/black balance eyedroppers -->
 <rect x="633.4" y="243.5" width="5.8" height="5.8" rx=".6" stroke="#707070" stroke-width=".8" fill="none"/><path d="M636.4 246.5l5.6-5.2" stroke="#707070" stroke-width="1"/><path d="M641.0 242.1l1.6-1.6" stroke="#7a7a7a" stroke-width="1.8"/><rect x="657.2" y="243.3" width="5.8" height="5.8" rx=".6" stroke="#707070" stroke-width=".8" fill="none"/><path d="M660.2 246.3l5.6-5.2" stroke="#707070" stroke-width="1"/><path d="M664.8000000000001 241.9l1.6-1.6" stroke="#7a7a7a" stroke-width="1.8"/><rect x="633.4" y="261.8" width="5.8" height="5.8" rx=".6" stroke="#707070" stroke-width=".8" fill="none"/><path d="M636.4 264.8l5.6-5.2" stroke="#707070" stroke-width="1"/><path d="M641.0 260.40000000000003l1.6-1.6" stroke="#7a7a7a" stroke-width="1.8"/>
 <!-- dropdown chevrons -->
 <path d="M696.5 323.8l2.7 2.7 2.7-2.7" stroke-width=".9"/>
 <path d="M696.5 342l2.7 2.7 2.7-2.7" stroke-width=".9"/>
 <!-- link -->
 <rect x="714.5" y="332.5" width="4.5" height="3.2" rx="1.4" stroke-width=".8"/><rect x="719.2" y="332.5" width="4.5" height="3.2" rx="1.4" stroke-width=".8"/>
 <!-- bottom buttons icons -->
 <path d="M546.2 412.3l10 4.4-10 4.4z" fill="#ececec" stroke="none"/>
 <path d="M636 414.2h2.2l.9-1.2h3.6l.9 1.2h2.4v6h-10z" fill="#ececec" stroke="none"/><circle cx="641" cy="417.2" r="1.7" fill="#4a4d53" stroke="none"/>
 <path d="M694.5 415.2l3 3 3-3" stroke-width=".9"/>
 <path d="M789.5 415.2l3 3 3-3" stroke-width=".9"/>
 <rect x="732.7" y="411.3" width="8.8" height="9.5" rx="1.2" stroke-width="1"/><path d="M734.5 414.5h5.5" stroke-width=".8"/><path d="M735.5 419.5l4.5-4.5" stroke-width="1.1"/><path d="M734.5 417.5v2.3h5" stroke-width=".7"/>
</svg>
<svg width="800" height="429" style="left:0;top:0" fill="none" stroke="#f0f0f0" stroke-width="1" stroke-linecap="round" stroke-linejoin="round">
 <!-- observation microscope (white on blue) -->
 <path fill="#f2f2f2" stroke="none" d="M529.9 34.3l1.6-1.7 2.5 2.3h7.2q2 0 2 2V45.4H529.8V41.4h7.4v-2.6l-2.2-.4-1.4-1.4-1.2.4z"/>
 <path stroke="#3a71c3" stroke-width=".8" d="M530.6 43.2h6.2"/>
 <circle cx="539.6" cy="42.9" r="1.7" fill="#3a71c3" stroke="#f2f2f2" stroke-width=".7"/>
 <path stroke="#f2f2f2" stroke-width=".5" d="M537.6 42.9h4M539.6 40.9v4"/>
 <!-- acquisition -->
 <rect x="529.7" y="79.4" width="7.7" height="6.3" rx=".5" stroke="#cfcfcf" stroke-width="1"/>
 <path fill="#f2f2f2" stroke="#282828" stroke-width=".7" d="M532.6 84.2h2.6l1-1.6h3.6l1 1.6h2.3v6.2h-10.5z"/>
 <circle cx="538" cy="87.2" r="1.7" fill="#1a1a1a" stroke="none"/>
 <!-- processing -->
 <rect x="529.3" y="124.7" width="13.6" height="13" fill="#efefef" stroke="none"/>
 <path stroke="#282828" stroke-width=".6" d="M536.3 124.7v13"/>
 <g fill="#1e1e1e" stroke="none"><circle cx="533.5" cy="128.3" r="1.3"/><circle cx="540.1" cy="128.3" r="1.3"/><circle cx="533" cy="135.2" r=".9"/><circle cx="539.9" cy="135.2" r=".9"/><rect x="534.2" y="130.6" width="4.6" height="2.2" rx="1"/></g>
 <!-- annotations pencil -->
 <path stroke="#f2f2f2" stroke-width="2.4" stroke-linecap="butt" d="M530.5 182.5l6.6-9.3"/>
 <path fill="#f2f2f2" stroke="none" d="M529.2 184.6l.2-1.9 1.6 1.1z"/>
 <!-- 2D -->
 <path stroke="#e8e8e8" stroke-width=".8" d="M530.8 216.8v8.2l11.2 3.2"/>
 <circle cx="530.8" cy="216.8" r="1.1" fill="#f0f0f0" stroke="none"/><circle cx="530.8" cy="225" r="1.1" fill="#f0f0f0" stroke="none"/><circle cx="542" cy="228.2" r="1.1" fill="#f0f0f0" stroke="none"/>
 <path fill="#ececec" stroke="none" d="M533.3 216.6l7.8 1.5v7.1l-7.8-1.6z"/>
 <!-- 3D -->
 <path stroke="#e8e8e8" stroke-width=".8" d="M530.8 264v7.8l8.8 3M530.8 271.8l11.2-4.8"/>
 <circle cx="530.8" cy="264" r="1.1" fill="#f0f0f0" stroke="none"/><circle cx="530.8" cy="271.8" r="1.1" fill="#f0f0f0" stroke="none"/><circle cx="539.6" cy="274.8" r="1.1" fill="#f0f0f0" stroke="none"/><circle cx="542" cy="267" r="1.1" fill="#f0f0f0" stroke="none"/>
 <g stroke="#e4e4e4" stroke-width=".8"><ellipse cx="536.8" cy="266.3" rx="2.6" ry=".8"/><ellipse cx="536.8" cy="268.3" rx="3.2" ry=".9"/><ellipse cx="536.8" cy="270.4" rx="3.6" ry="1"/></g>
 <!-- materials -->
 <path fill="#dcdcdc" stroke="none" d="M529.3 312h5.8l2.5 2.2v6.3l-2.2 1.2h-6.1z"/>
 <path fill="#333" stroke="none" d="M532 315l2 1.5-.5 2z"/>
 <path fill="#efefef" stroke="none" d="M534.2 319.8h1.4v2.2h-1.4zM536.6 317h1.4v5h-1.4zM539 314.2h1.5v7.8H539zM541.4 316h1.5v6h-1.5z"/>
 <path stroke="#f0f0f0" stroke-width=".7" d="M534 322.2h9"/>
 <!-- report -->
 <path stroke="#e6e6e6" stroke-width="1" d="M531.6 358.8h6.8l2.8 2.8v9.5h-9.6z"/>
 <path fill="#e6e6e6" stroke="none" d="M538.2 358.8l3 3h-3z"/>
 <path stroke="#dcdcdc" stroke-width=".8" d="M533.3 365.6h6.2M533.3 367.4h6.2M533.3 369.2h6.2"/>
 <!-- status bar icons -->
 <g stroke="#f0f0f0" stroke-width="1">
 <path d="M407.5 412v9M403 416.5h9"/>
 <path fill="#f0f0f0" stroke="none" d="M407.5 411.5l1.7 1.9h-3.4zM407.5 421.5l1.7-1.9h-3.4zM402.8 416.5l1.9-1.7v3.4zM412.2 416.5l-1.9-1.7v3.4z"/>
 <path d="M454.2 413v7"/>
 <path fill="#f0f0f0" stroke="none" d="M454.2 411.5l1.6 2h-3.2zM454.2 421.5l1.6-2h-3.2z"/>
 <rect x="493.7" y="411.6" width="10" height="7.5" rx="1"/>
 <path d="M498.7 419.3v1.5M496.3 421.2h4.8M498.7 414.5v3"/>
 </g>
 <path fill="#d8d8d8" stroke="none" d="M437.6 420.2h3.2l-1.6 1.6zM482 420.2h3.2l-1.6 1.6zM503.3 399.6h3.2l-1.6 1.6z"/>
 <!-- tab row -->
 <path fill="#e6e6e6" stroke="none" d="M1.3 44h2.9l-1.45 1.5z"/>
 <path stroke="#888" stroke-width=".7" d="M9.6 41l-2.4 1.8 2.4 1.8z"/>
 <rect x="14.4" y="40.4" width="4.4" height="1.7" fill="#e03a3a" stroke="none"/>
 <rect x="14.4" y="42.1" width="4.4" height="1.5" fill="#36b84a" stroke="none"/>
 <rect x="14.4" y="43.6" width="4.4" height="1.6" fill="#3b5ee0" stroke="none"/>
 <path stroke="#f0f0f0" stroke-width=".9" d="M57.9 41.4l3 3M60.9 41.4l-3 3"/>
 <path stroke="#888" stroke-width=".7" d="M490.5 41.2l1.6 1.4-1.6 1.4"/>
 <path fill="#eaeaea" stroke="none" d="M495 43.5q0-2.5 3-2.6q2.8 0 3.3 2.4q.2 2.2-2.6 2.4h-3z"/>
 <path fill="#d8d8d8" stroke="none" d="M504.4 42.2h3.2l-1.6 1.6z"/>
 <!-- subbar icon -->
 <path fill="#eaeaea" stroke="none" d="M8.2 53.6q0-3 2.9-3q2.9 0 2.9 3v3.4H8.2z"/>
 <path fill="#333" stroke="none" d="M9.5 52.5h.8v1.8h-.8zM12 52.5h.8v1.8H12z"/>
 <path fill="#bbb" stroke="none" d="M15.9 53.8h2v.7h-2z"/>
</svg>

</body></html>
